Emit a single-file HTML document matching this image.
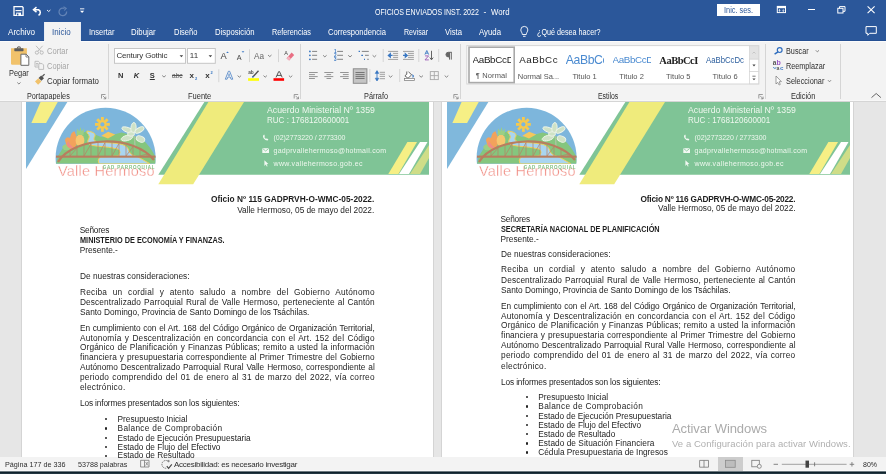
<!DOCTYPE html>
<html><head><meta charset="utf-8"><style>
html,body{margin:0;padding:0;width:886px;height:474px;overflow:hidden;background:#e6e6e6}
body{position:relative;font-family:"Liberation Sans",sans-serif}
#w{position:absolute;left:0;top:0;width:886px;height:474px;will-change:transform}
.t{position:absolute;white-space:pre}
.j{text-align:justify;text-align-last:justify;white-space:normal}
.r{position:absolute}
svg{position:absolute}
</style></head><body><div id="w">
<div class="r" style="left:0px;top:0px;width:886px;height:41px;background:#2b579a;"></div><div class="r" style="left:0px;top:41px;width:886px;height:61px;background:#f3f3f3;"></div><div class="r" style="left:0px;top:102px;width:886px;height:355px;background:#e6e6e6;"></div><div class="r" style="left:0px;top:457px;width:886px;height:14px;background:#f3f3f3;"></div><div class="r" style="left:0px;top:470px;width:886px;height:1px;background:#fafafa;"></div><div class="r" style="left:0px;top:471px;width:886px;height:1px;background:#6d7a80;"></div><div class="r" style="left:0px;top:472px;width:886px;height:1px;background:#0f222c;"></div><div class="r" style="left:0px;top:473px;width:886px;height:1px;background:#233741;"></div><div class="r" style="left:0px;top:40px;width:886px;height:1px;background:#244f92;"></div><div class="r" style="left:0px;top:41px;width:886px;height:1px;background:#fbfbfb;"></div><div class="t" style="left:375.0px;top:6.5px;font-size:8.7px;line-height:11px;letter-spacing:0.000px;color:#ffffff;transform:scaleX(0.8086);transform-origin:0 0;">OFICIOS ENVIADOS INST. 2022</div><div class="t" style="left:483.5px;top:6.5px;font-size:8.7px;line-height:11px;letter-spacing:0.000px;color:#ffffff;">-</div><div class="t" style="left:490.6px;top:6.5px;font-size:8.7px;line-height:11px;letter-spacing:0.000px;color:#ffffff;transform:scaleX(0.8983);transform-origin:0 0;">Word</div><div class="r" style="left:717px;top:4px;width:43px;height:12px;background:#ffffff;"></div><div class="t" style="left:724.0px;top:5.1px;font-size:9px;line-height:11px;letter-spacing:0.000px;color:#2b579a;transform:scaleX(0.8169);transform-origin:0 0;">Inic. ses.</div><div class="r" style="left:45px;top:22px;width:35px;height:20px;background:#f3f3f3;"></div><div class="t" style="left:8.0px;top:26.7px;font-size:9px;line-height:11px;letter-spacing:0.000px;color:#ffffff;transform:scaleX(0.9000);transform-origin:0 0;">Archivo</div><div class="t" style="left:52.4px;top:26.7px;font-size:9px;line-height:11px;letter-spacing:0.000px;color:#2b579a;transform:scaleX(0.8857);transform-origin:0 0;">Inicio</div><div class="t" style="left:88.5px;top:26.7px;font-size:9px;line-height:11px;letter-spacing:0.000px;color:#ffffff;transform:scaleX(0.8361);transform-origin:0 0;">Insertar</div><div class="t" style="left:131.4px;top:26.7px;font-size:9px;line-height:11px;letter-spacing:0.000px;color:#ffffff;transform:scaleX(0.8632);transform-origin:0 0;">Dibujar</div><div class="t" style="left:173.6px;top:26.7px;font-size:9px;line-height:11px;letter-spacing:0.000px;color:#ffffff;transform:scaleX(0.8357);transform-origin:0 0;">Diseño</div><div class="t" style="left:214.7px;top:26.7px;font-size:9px;line-height:11px;letter-spacing:0.000px;color:#ffffff;transform:scaleX(0.8587);transform-origin:0 0;">Disposición</div><div class="t" style="left:271.8px;top:26.7px;font-size:9px;line-height:11px;letter-spacing:0.000px;color:#ffffff;transform:scaleX(0.8083);transform-origin:0 0;">Referencias</div><div class="t" style="left:328.2px;top:26.7px;font-size:9px;line-height:11px;letter-spacing:0.000px;color:#ffffff;transform:scaleX(0.8467);transform-origin:0 0;">Correspondencia</div><div class="t" style="left:404.0px;top:26.7px;font-size:9px;line-height:11px;letter-spacing:0.000px;color:#ffffff;transform:scaleX(0.7869);transform-origin:0 0;">Revisar</div><div class="t" style="left:445.0px;top:26.7px;font-size:9px;line-height:11px;letter-spacing:0.000px;color:#ffffff;transform:scaleX(0.8567);transform-origin:0 0;">Vista</div><div class="t" style="left:479.0px;top:26.7px;font-size:9px;line-height:11px;letter-spacing:0.000px;color:#ffffff;transform:scaleX(0.8681);transform-origin:0 0;">Ayuda</div><div class="t" style="left:536.5px;top:26.7px;font-size:9px;line-height:11px;letter-spacing:0.000px;color:#ffffff;transform:scaleX(0.7987);transform-origin:0 0;">¿Qué desea hacer?</div><div class="r" style="left:44px;top:22px;width:1px;height:19px;background:#e8ecf3"></div><div class="r" style="left:80px;top:22px;width:1px;height:19px;background:#e8ecf3"></div><svg style="left:0;top:0" width="886" height="42" viewBox="0 0 886 42" fill="none" stroke="#fff"><path d="M14 6.7 H22.3 L23.1 7.5 V15.3 H14 Z" stroke-width="1.3"/><path d="M15.5 10.6 H21.6" stroke-width="1.1"/><rect x="16.2" y="12.6" width="4.8" height="2.8" fill="#fff" stroke="none"/><rect x="17" y="13.6" width="1.4" height="1.8" fill="#2b579a" stroke="none"/><path d="M34.5 9.7 H38.5 A3 3 0 0 1 38.5 15.2" stroke-width="1.5"/><path d="M36.5 7.2 L33.5 9.7 L36.5 12.2" stroke-width="1.5"/><path d="M47 10 L48.7 11.5 L50.4 10" stroke-width="0.9"/><path d="M64.5 8.5 A3.8 3.8 0 1 0 66.6 11.5" stroke="#6283b6" stroke-width="1.3"/><path d="M63.5 6.8 L66.2 8.3 L64.2 10.5" stroke="#6283b6" stroke-width="1.1"/><rect x="80" y="8.4" width="4.3" height="0.9" fill="#fff" stroke="none"/><path d="M80 10.8 H84.2 L82.1 13 Z" fill="#fff" stroke="none"/><rect x="777.3" y="6.4" width="8.2" height="6.2" stroke-width="1"/><rect x="777" y="6" width="9" height="2.2" fill="#fff" stroke="none"/><path d="M779.5 11.6 V9.6 M778.7 10.4 L779.5 9.6 L780.3 10.4 M783.3 9.4 V11.4 M782.5 10.6 L783.3 11.4 L784.1 10.6" stroke-width="0.8"/><path d="M808 9.5 H815" stroke-width="1"/><rect x="837.8" y="8.3" width="5.2" height="4.7" stroke-width="1"/><path d="M839.5 8.3 V6.6 H845 V11.3 H843" stroke-width="1"/><path d="M867.6 6.3 L874.6 13.1 M874.6 6.3 L867.6 13.1" stroke-width="1.1"/><path d="M866 26.6 H876.3 V33.3 H869.8 L867.8 35.3 V33.3 H866 Z" stroke-width="1"/><path d="M522.3 34.5 C522.3 32.5 520.8 31.8 520.8 29.9 A3.5 3.5 0 0 1 527.8 29.9 C527.8 31.8 526.3 32.5 526.3 34.5 Z M523 36.3 H525.6" stroke-width="0.9"/></svg><svg style="left:0;top:42px" width="886" height="59" viewBox="0 42 886 59" fill="none" stroke="#444"><path d="M108.5 44 V99" stroke="#d5d5d5" stroke-width="1"/><path d="M300.5 44 V99" stroke="#d5d5d5" stroke-width="1"/><path d="M460.5 44 V99" stroke="#d5d5d5" stroke-width="1"/><path d="M765.5 44 V99" stroke="#d5d5d5" stroke-width="1"/><path d="M840.5 44 V99" stroke="#d5d5d5" stroke-width="1"/><path d="M101.5 98.5 V94.5 H105.5 M102.8 95.8 L105.8 98.8 M105.8 96.6 V98.8 H103.6" stroke="#777" stroke-width="0.7"/><path d="M294.2 98.5 V94.5 H298.2 M295.5 95.8 L298.5 98.8 M298.5 96.6 V98.8 H296.3" stroke="#777" stroke-width="0.7"/><path d="M453.8 98.5 V94.5 H457.8 M455.1 95.8 L458.1 98.8 M458.1 96.6 V98.8 H455.90000000000003" stroke="#777" stroke-width="0.7"/><path d="M758.8 98.5 V94.5 H762.8 M760.0999999999999 95.8 L763.0999999999999 98.8 M763.0999999999999 96.6 V98.8 H760.9" stroke="#777" stroke-width="0.7"/><path d="M11 48.3 H26.9 V64.8 H12.2 Q11 64.8 11 63.6 Z" fill="#f1c26b" stroke="none"/><rect x="14.3" y="48.2" width="9.2" height="3" rx="0.6" fill="#5c5c5c" stroke="none"/><path d="M17.3 48.4 A1.6 1.6 0 0 1 20.5 48.4" stroke="#5c5c5c" stroke-width="1.1"/><path d="M20.9 54.2 H26.2 L28.8 56.8 V65.3 H20.9 Z" fill="#fff" stroke="#6a6a6a" stroke-width="1"/><path d="M26 54.4 V57 H28.6" stroke="#6a6a6a" stroke-width="0.8"/><path d="M17.3 82.5 L18.9 84 L20.5 82.5" stroke="#666" stroke-width="0.8"/><g stroke="#b5b5b5" stroke-width="0.9"><circle cx="36.9" cy="52.6" r="1.6"/><circle cx="41.7" cy="52.6" r="1.6"/><path d="M37.8 51.2 L42.6 45.8 M40.8 51.2 L36 45.8"/></g><g stroke="#b9b9b9" stroke-width="0.9"><path d="M35 61.3 H38.4 L39.6 62.5 V67 H35 Z"/><path d="M38.8 63.6 H42.2 L43.6 65 V69.4 H38.8 Z" fill="#f3f3f3"/><path d="M36 63.5 H38 M36 65 H38"/></g><path d="M35 81.6 L38.3 78.3 L41.4 81.4 L38.1 84.7 Z" fill="#f1c26b" stroke="none"/><path d="M38.6 78 L41.2 75.4 L44 78.2 L41.4 80.8 Z" fill="#505050" stroke="none"/><path d="M42.3 76.5 L44.6 74.2" stroke="#505050" stroke-width="1.2"/><rect x="114.5" y="48.5" width="71" height="14.8" fill="#fff" stroke="#c6c6c6" stroke-width="1"/><rect x="187.5" y="48.5" width="27.8" height="14.8" fill="#fff" stroke="#c6c6c6" stroke-width="1"/><path d="M179.6 55.3 H183.2 L181.4 57.3 Z M208.6 55.3 H212.2 L210.4 57.3 Z" fill="#444" stroke="none"/><path d="M226.2 52.9 L227.5 51.4 L228.8 52.9 Z" fill="#3a78c3" stroke="none"/><path d="M241.6 51.2 L244.4 51.2 L243 52.8 Z" fill="#3a78c3" stroke="none"/><path d="M249.5 49.3 V62.1" stroke="#d5d5d5" stroke-width="1"/><path d="M278.5 49.3 V62.1" stroke="#d5d5d5" stroke-width="1"/><path d="M218.8 69.3 V82.2" stroke="#d5d5d5" stroke-width="1"/><path d="M383.2 49 V62" stroke="#d5d5d5" stroke-width="1"/><path d="M418.8 49 V62" stroke="#d5d5d5" stroke-width="1"/><path d="M438.7 49 V62" stroke="#d5d5d5" stroke-width="1"/><path d="M369.9 69 V82" stroke="#d5d5d5" stroke-width="1"/><path d="M399.7 69 V82" stroke="#d5d5d5" stroke-width="1"/><path d="M268 55 L269.75 56.6 L271.5 55" stroke="#6a6a6a" stroke-width="0.8"/><path d="M162.2 75.5 L164.0 77.1 L165.8 75.5" stroke="#6a6a6a" stroke-width="0.8"/><path d="M237.6 75.6 L239.35 77.19999999999999 L241.1 75.6" stroke="#6a6a6a" stroke-width="0.8"/><path d="M263.5 75.6 L265.2 77.19999999999999 L266.9 75.6" stroke="#6a6a6a" stroke-width="0.8"/><path d="M288.9 75.6 L290.6 77.19999999999999 L292.3 75.6" stroke="#6a6a6a" stroke-width="0.8"/><path d="M323.1 55.3 L324.85 56.9 L326.6 55.3" stroke="#6a6a6a" stroke-width="0.8"/><path d="M348.2 55.3 L350.04999999999995 56.9 L351.9 55.3" stroke="#6a6a6a" stroke-width="0.8"/><path d="M372.6 55.3 L374.4 56.9 L376.2 55.3" stroke="#6a6a6a" stroke-width="0.8"/><path d="M388.8 75.6 L390.6 77.19999999999999 L392.4 75.6" stroke="#6a6a6a" stroke-width="0.8"/><path d="M419.3 75.6 L421.15 77.19999999999999 L423 75.6" stroke="#6a6a6a" stroke-width="0.8"/><path d="M444.7 75.6 L446.5 77.19999999999999 L448.3 75.6" stroke="#6a6a6a" stroke-width="0.8"/><path d="M815.8 50.3 L817.4 51.9 L819 50.3" stroke="#6a6a6a" stroke-width="0.8"/><path d="M828 80.2 L829.5 81.8 L831 80.2" stroke="#6a6a6a" stroke-width="0.8"/><path d="M286.6 58.3 L291.6 52.6 L294.2 55 L289.2 60.6 Z" fill="#e96f84" stroke="none"/><path d="M286.4 58.6 L288.5 56.3 L290.8 58.4 L289 60.6 Z" fill="#f4b3bf" stroke="none"/><path d="M225.3 79.2 L228.4 71.3 H229.7 L232.8 79.2 H231 L230.2 77 H227.9 L227.1 79.2 Z" stroke="#4a82c6" stroke-width="0.8" stroke-linejoin="round" fill="#f3f3f3"/><path d="M228.4 75.6 H229.7 L229.05 73.6 Z" stroke="#4a82c6" stroke-width="0.6" fill="none"/><rect x="248.1" y="78.2" width="10.9" height="2.6" fill="#ffff00" stroke="none"/><path d="M252.5 77.3 L258.5 70.8" stroke="#505050" stroke-width="1.3"/><path d="M252.4 77.4 L253.4 76.1" stroke="#3a78c3" stroke-width="1.2"/><rect x="273.5" y="78.2" width="10.6" height="2.6" fill="#ff0000" stroke="none"/><path d="M276 77.4 L278.7 71.6 H279.5 L282.2 77.4 M277 75.4 H281.2" stroke="#444" stroke-width="0.9"/><circle cx="309.9" cy="51.4" r="0.9" fill="#3a78c3" stroke="none"/><path d="M312.1 51.4 H317.1" stroke="#777" stroke-width="0.9"/><path d="M337.2 51.4 H343" stroke="#777" stroke-width="0.9"/><circle cx="309.9" cy="55.3" r="0.9" fill="#3a78c3" stroke="none"/><path d="M312.1 55.3 H317.1" stroke="#777" stroke-width="0.9"/><path d="M337.2 55.3 H343" stroke="#777" stroke-width="0.9"/><circle cx="309.9" cy="59.3" r="0.9" fill="#3a78c3" stroke="none"/><path d="M312.1 59.3 H317.1" stroke="#777" stroke-width="0.9"/><path d="M337.2 59.3 H343" stroke="#777" stroke-width="0.9"/><path d="M358.6 51.4 H360 M361.3 55.3 H363 M364 59.3 H365" stroke="#3a78c3" stroke-width="1.3"/><path d="M361.8 51.4 H368.8 M365 55.3 H368.8 M367.2 59.3 H368.8" stroke="#777" stroke-width="0.9"/><text x="333.9" y="53.1" font-size="4.6" font-weight="bold" fill="#3a78c3" stroke="none" font-family="Liberation Sans">1</text><text x="333.9" y="57.0" font-size="4.6" font-weight="bold" fill="#3a78c3" stroke="none" font-family="Liberation Sans">2</text><text x="333.9" y="61.0" font-size="4.6" font-weight="bold" fill="#3a78c3" stroke="none" font-family="Liberation Sans">3</text><path d="M388.1 51.4 H398.1 M388.1 59.4 H398.1 M393.1 53.4 H398.1 M393.1 55.4 H398.1 M393.1 57.4 H398.1" stroke="#8a8a8a" stroke-width="0.8"/><path d="M392.6 55.4 H389.6 M390.3 53.6 L388.3 55.4 L390.3 57.2 Z" stroke="#3a78c3" stroke-width="1.2" fill="#3a78c3"/><path d="M403 51.4 H413.9 M403 59.4 H413.9 M408 53.4 H413.9 M408 55.4 H413.9 M408 57.4 H413.9" stroke="#8a8a8a" stroke-width="0.8"/><path d="M403 55.4 H406 M405.3 53.6 L407.3 55.4 L405.3 57.2 Z" stroke="#3a78c3" stroke-width="1.2" fill="#3a78c3"/><path d="M424.9 54.6 L426.8 50.5 L428.7 54.6 M425.7 53.2 H427.9" stroke="#3a78c3" stroke-width="0.9"/><path d="M425 55.9 H428.6 L425 59.9 H428.8" stroke="#9b59b6" stroke-width="0.9"/><path d="M431.5 50.8 V59.5 M429.8 57.6 L431.5 59.8 L433.2 57.6" stroke="#555" stroke-width="0.9"/><path d="M309.0 72.5 H317.7" stroke="#8a8a8a" stroke-width="0.9"/><path d="M309.0 74.6 H314.9" stroke="#8a8a8a" stroke-width="0.9"/><path d="M309.0 76.6 H317.7" stroke="#8a8a8a" stroke-width="0.9"/><path d="M309.0 78.5 H314.9" stroke="#8a8a8a" stroke-width="0.9"/><path d="M324.3 72.5 H333.3" stroke="#8a8a8a" stroke-width="0.9"/><path d="M326.5 74.6 H331.1" stroke="#8a8a8a" stroke-width="0.9"/><path d="M324.3 76.6 H333.3" stroke="#8a8a8a" stroke-width="0.9"/><path d="M326.5 78.5 H331.1" stroke="#8a8a8a" stroke-width="0.9"/><path d="M340.1 72.5 H348.7" stroke="#8a8a8a" stroke-width="0.9"/><path d="M342.9 74.6 H348.7" stroke="#8a8a8a" stroke-width="0.9"/><path d="M340.1 76.6 H348.7" stroke="#8a8a8a" stroke-width="0.9"/><path d="M342.9 78.5 H348.7" stroke="#8a8a8a" stroke-width="0.9"/><rect x="353.3" y="68.8" width="13.6" height="14.5" fill="#c5c5c5" stroke="#8c8c8c" stroke-width="1"/><path d="M355.5 72.5 H364.6" stroke="#6c6c6c" stroke-width="0.9"/><path d="M355.5 74.6 H364.6" stroke="#6c6c6c" stroke-width="0.9"/><path d="M355.5 76.6 H364.6" stroke="#6c6c6c" stroke-width="0.9"/><path d="M355.5 78.5 H364.6" stroke="#6c6c6c" stroke-width="0.9"/><path d="M377 71 V80.5" stroke="#3a78c3" stroke-width="0.9"/><path d="M375.2 73.4 L377 70.6 L378.8 73.4 Z M375.2 78.2 L377 81 L378.8 78.2 Z" fill="#3a78c3" stroke="#3a78c3" stroke-width="0.6"/><path d="M379.7 72.3 H385 M379.7 74.3 H385 M379.7 76.4 H385 M379.7 78.7 H385" stroke="#8a8a8a" stroke-width="0.8"/><path d="M406.8 71.5 V74.2 L404.9 75.8 L408 78.3 L411.6 74.9 L408.4 71.6" stroke="#555" stroke-width="0.9" fill="#fff"/><path d="M412.6 74.6 Q414.6 76.2 412.9 77.6 Z" fill="#3a78c3" stroke="#3a78c3" stroke-width="0.5"/><rect x="404.5" y="78.6" width="10" height="1.8" fill="#fff" stroke="#777" stroke-width="0.7"/><rect x="430.3" y="71.6" width="8" height="8" stroke="#a8a8a8" stroke-width="0.9"/><path d="M434.3 71.6 V79.6 M430.3 75.6 H438.3" stroke="#a8a8a8" stroke-width="0.9"/><circle cx="779.7" cy="50.1" r="2.4" stroke="#2f6ebf" stroke-width="1.2"/><path d="M778 51.9 L774.6 54.2" stroke="#2f6ebf" stroke-width="1.5"/><path d="M776 76 V84 L777.6 82.4 L779.2 85 L780.3 84.4 L779 81.8 L781.4 81.6 Z" stroke="#777" stroke-width="0.7" fill="#fff"/><path d="M773.2 67.4 L774.8 68.4 L776.3 67.6" stroke="#3f7cc8" stroke-width="1"/><rect x="466.8" y="45.6" width="292" height="38.4" fill="#fff" stroke="#d6d6d6" stroke-width="1"/><rect x="469" y="47.2" width="45.2" height="35.4" fill="#fff" stroke="#a9a9a9" stroke-width="1.6"/><rect x="749.4" y="45.8" width="9.3" height="13.4" fill="#e3e3e3" stroke="#d6d6d6" stroke-width="0.8"/><rect x="749.4" y="59.2" width="9.3" height="12.3" fill="#fff" stroke="#d6d6d6" stroke-width="0.8"/><rect x="749.4" y="71.5" width="9.3" height="12.3" fill="#fff" stroke="#d6d6d6" stroke-width="0.8"/><path d="M752.5 53.5 L754 52 L755.5 53.5" stroke="#b9b9b9" stroke-width="0.7"/><path d="M752.4 64.6 H755.6 L754 66.4 Z M752.4 78.4 H755.6 L754 80.2 Z" fill="#444" stroke="none"/><path d="M752.4 76.2 H755.6" stroke="#444" stroke-width="0.7"/><path d="M449.5 52.3 V59.6 M451.3 52.3 V59.6 M451.8 52.3 H448.3 A2.3 2.3 0 0 0 448.3 56.9 H449.5" stroke="#666" stroke-width="1"/><path d="M448.3 52.3 A2.3 2.3 0 0 0 448.3 56.9 H449.5 V52.3 Z" fill="#666" stroke="none"/><path d="M871.5 97.6 L876.2 93.5 L880.9 97.6" stroke="#555" stroke-width="0.9"/></svg><div class="t" style="left:9.0px;top:68.4px;font-size:8.5px;line-height:11px;letter-spacing:0.000px;color:#2e2e2e;transform:scaleX(0.8721);transform-origin:0 0;">Pegar</div><div class="t" style="left:47.0px;top:45.8px;font-size:8.5px;line-height:11px;letter-spacing:0.000px;color:#a6a6a6;transform:scaleX(0.8889);transform-origin:0 0;">Cortar</div><div class="t" style="left:47.0px;top:60.8px;font-size:8.5px;line-height:11px;letter-spacing:0.000px;color:#a6a6a6;transform:scaleX(0.8778);transform-origin:0 0;">Copiar</div><div class="t" style="left:47.0px;top:75.7px;font-size:8.5px;line-height:11px;letter-spacing:0.000px;color:#2e2e2e;transform:scaleX(0.9244);transform-origin:0 0;">Copiar formato</div><div class="t" style="left:27.4px;top:90.8px;font-size:8.5px;line-height:11px;letter-spacing:0.000px;color:#2e2e2e;transform:scaleX(0.8536);transform-origin:0 0;">Portapapeles</div><div class="t" style="left:188.0px;top:90.8px;font-size:8.5px;line-height:11px;letter-spacing:0.000px;color:#2e2e2e;transform:scaleX(0.8798);transform-origin:0 0;">Fuente</div><div class="t" style="left:363.8px;top:90.8px;font-size:8.5px;line-height:11px;letter-spacing:0.000px;color:#2e2e2e;transform:scaleX(0.8605);transform-origin:0 0;">Párrafo</div><div class="t" style="left:597.7px;top:90.8px;font-size:8.5px;line-height:11px;letter-spacing:0.000px;color:#2e2e2e;transform:scaleX(0.8105);transform-origin:0 0;">Estilos</div><div class="t" style="left:791.4px;top:90.8px;font-size:8.5px;line-height:11px;letter-spacing:0.000px;color:#2e2e2e;transform:scaleX(0.8744);transform-origin:0 0;">Edición</div><div class="t" style="left:785.6px;top:45.8px;font-size:8.5px;line-height:11px;letter-spacing:0.000px;color:#2e2e2e;transform:scaleX(0.8538);transform-origin:0 0;">Buscar</div><div class="t" style="left:785.6px;top:60.6px;font-size:8.5px;line-height:11px;letter-spacing:0.000px;color:#2e2e2e;transform:scaleX(0.8526);transform-origin:0 0;">Reemplazar</div><div class="t" style="left:785.6px;top:75.7px;font-size:8.5px;line-height:11px;letter-spacing:0.000px;color:#2e2e2e;transform:scaleX(0.8638);transform-origin:0 0;">Seleccionar</div><div class="t" style="left:116.4px;top:51.2px;font-size:8px;line-height:10px;letter-spacing:-0.175px;color:#333;">Century Gothic</div><div class="t" style="left:189.8px;top:51.2px;font-size:8px;line-height:10px;letter-spacing:0.000px;color:#333;">11</div><div class="t" style="left:118.1px;top:71.0px;font-size:7.5px;line-height:9px;letter-spacing:0.778px;color:#333;font-weight:bold;">N</div><div class="t" style="left:133.7px;top:71.0px;font-size:7.5px;line-height:9px;letter-spacing:0.078px;color:#333;font-weight:bold;font-style:italic;">K</div><div class="t" style="left:149.8px;top:71.0px;font-size:7.5px;line-height:9px;letter-spacing:0.000px;color:#333;font-weight:bold;text-decoration:underline;">S</div><div class="t" style="left:172.4px;top:70.8px;font-size:7.2px;line-height:9px;letter-spacing:0.000px;color:#555;transform:scaleX(0.9143);transform-origin:0 0;text-decoration:line-through;">abc</div><div class="t" style="left:189.5px;top:70.8px;font-size:8px;line-height:10px;letter-spacing:0.247px;color:#333;font-weight:bold;">x</div><div class="t" style="left:195.0px;top:75.7px;font-size:4px;line-height:5px;letter-spacing:0.281px;color:#3a78c3;font-weight:bold;">2</div><div class="t" style="left:205.3px;top:70.8px;font-size:8px;line-height:10px;letter-spacing:0.247px;color:#333;font-weight:bold;">x</div><div class="t" style="left:210.5px;top:69.9px;font-size:4px;line-height:5px;letter-spacing:0.281px;color:#3a78c3;font-weight:bold;">2</div><div class="t" style="left:220.5px;top:50.2px;font-size:9.3px;line-height:12px;letter-spacing:0.000px;color:#444;">A</div><div class="t" style="left:236.8px;top:52.5px;font-size:7.2px;line-height:9px;letter-spacing:0.000px;color:#444;">A</div><div class="t" style="left:253.9px;top:50.2px;font-size:9.2px;line-height:12px;letter-spacing:0.000px;color:#666;transform:scaleX(0.8901);transform-origin:0 0;">Aa</div><div class="t" style="left:284.2px;top:50.0px;font-size:5.5px;line-height:7px;letter-spacing:0.628px;color:#444;">A</div><div class="t" style="left:248.2px;top:70.0px;font-size:4.8px;line-height:6px;letter-spacing:0.000px;color:#555;font-weight:bold;">ab</div><div class="t" style="left:772.8px;top:59.4px;font-size:6.5px;line-height:8px;letter-spacing:0.000px;color:#555;font-weight:bold;">a</div><div class="t" style="left:776.6px;top:58.4px;font-size:7px;line-height:9px;letter-spacing:0.000px;color:#9a55c8;font-weight:bold;">b</div><div class="t" style="left:776.6px;top:65.0px;font-size:5.2px;line-height:6px;letter-spacing:0.000px;color:#555;font-weight:bold;">a</div><div class="t" style="left:779.9px;top:64.0px;font-size:6.2px;line-height:8px;letter-spacing:0.000px;color:#3f7cc8;font-weight:bold;">c</div><div class="t" style="left:472.5px;top:54.0px;font-size:9.8px;line-height:12px;letter-spacing:0.000px;color:#222;width:38.5px;overflow:hidden;letter-spacing:-0.3px">AaBbCcD</div><div class="t" style="left:475.8px;top:70.9px;font-size:7.5px;line-height:9px;letter-spacing:0.129px;color:#555;">¶ Normal</div><div class="t" style="left:519.2px;top:54.2px;font-size:9.8px;line-height:12px;letter-spacing:0.489px;color:#222;">AaBbCc</div><div class="t" style="left:517.8px;top:71.5px;font-size:7.5px;line-height:9px;letter-spacing:-0.043px;color:#555;">Normal Sa...</div><div class="t" style="left:565.8px;top:52.8px;font-size:12.2px;line-height:15px;letter-spacing:0.000px;color:#4a8ad0;width:38.4px;overflow:hidden;letter-spacing:-0.4px">AaBbCc</div><div class="t" style="left:572.4px;top:71.5px;font-size:7.5px;line-height:9px;letter-spacing:-0.002px;color:#555;">Titulo 1</div><div class="t" style="left:612.6px;top:54.0px;font-size:9.8px;line-height:12px;letter-spacing:0.000px;color:#4a8ad0;width:38.2px;overflow:hidden;letter-spacing:-0.4px">AaBbCcD</div><div class="t" style="left:619.2px;top:71.5px;font-size:7.5px;line-height:9px;letter-spacing:0.055px;color:#555;">Titulo 2</div><div class="t" style="left:659.3px;top:53.5px;font-size:10.5px;line-height:13px;letter-spacing:0.000px;color:#222;font-weight:bold;width:38.7px;overflow:hidden;font-family:Liberation Serif,serif;letter-spacing:-0.5px">AaBbCcI</div><div class="t" style="left:666.0px;top:71.5px;font-size:7.5px;line-height:9px;letter-spacing:0.027px;color:#555;">Titulo 5</div><div class="t" style="left:706.2px;top:54.8px;font-size:8.6px;line-height:11px;letter-spacing:0.000px;color:#2d5f9e;transform:scaleX(0.9041);transform-origin:0 0;">AaBbCcDc</div><div class="t" style="left:712.6px;top:71.5px;font-size:7.5px;line-height:9px;letter-spacing:0.113px;color:#555;">Titulo 6</div><div class="r" style="left:718px;top:457px;width:25px;height:14px;background:#cdcdcd;"></div><svg style="left:0;top:456px" width="886" height="15" viewBox="0 456 886 15" fill="none" stroke="#777"><path d="M140.6 460.3 H144.5 V467 H140.6 Z M144.5 460.3 H149 V467 H144.5" stroke-width="0.8"/><path d="M145.6 462 L148 465.5 M148 462 L145.6 465.5" stroke-width="0.7"/><path d="M167.8 461 A3.9 3.9 0 1 0 166.5 468.2" stroke-width="1" stroke-dasharray="1.6 0.9"/><path d="M168.6 459.9 V462.3 M167.4 461.1 H169.8" stroke-width="0.8"/><path d="M166.8 466.2 L168.6 468.3 L171.8 464.4" stroke="#444" stroke-width="1.1"/><path d="M699.6 460.4 H704 V467.2 H699.6 Z M704 460.4 H708.5 V467.2 H704" stroke-width="0.8"/><rect x="725.6" y="460.3" width="9.6" height="7" fill="#bdbdbd" stroke="#8a8a8a" stroke-width="0.8"/><rect x="751.8" y="460.3" width="7.5" height="6.5" stroke-width="0.8"/><circle cx="759.3" cy="466.3" r="2" fill="#f3f3f3" stroke-width="0.8"/><path d="M773.6 464.3 H778 M849.7 464.3 H854.2 M851.95 462.1 V466.5" stroke="#777" stroke-width="0.9"/><path d="M781.8 464.3 H846.6" stroke="#8a8a8a" stroke-width="0.8"/><rect x="805.5" y="460.6" width="3.5" height="7.1" fill="#444" stroke="none"/><path d="M814.6 462.3 V466.3" stroke="#666" stroke-width="0.8"/></svg><div class="t" style="left:5.4px;top:459.6px;font-size:8px;line-height:10px;letter-spacing:0.000px;color:#2e2e2e;transform:scaleX(0.9000);transform-origin:0 0;">Página 177 de 336</div><div class="t" style="left:78.0px;top:459.6px;font-size:8px;line-height:10px;letter-spacing:0.000px;color:#2e2e2e;transform:scaleX(0.8931);transform-origin:0 0;">53788 palabras</div><div class="t" style="left:174.0px;top:459.6px;font-size:8px;line-height:10px;letter-spacing:-0.258px;color:#2e2e2e;">Accesibilidad: es necesario investigar</div><div class="t" style="left:862.8px;top:459.6px;font-size:8px;line-height:10px;letter-spacing:0.000px;color:#2e2e2e;transform:scaleX(0.8741);transform-origin:0 0;">80%</div><div class="r" style="left:21px;top:102px;width:1px;height:355px;background:#d4d4d4;"></div><div class="r" style="left:22px;top:102px;width:411px;height:355px;background:#ffffff;"></div><div class="r" style="left:433px;top:102px;width:1px;height:355px;background:#d4d4d4;"></div><div class="r" style="left:441px;top:102px;width:1px;height:355px;background:#d4d4d4;"></div><div class="r" style="left:442px;top:102px;width:411px;height:355px;background:#ffffff;"></div><div class="r" style="left:853px;top:102px;width:1px;height:355px;background:#d4d4d4;"></div><svg style="left:0;top:0" width="886" height="474" viewBox="0 0 886 474"><polygon points="26,101 68,101 26,169" fill="#80b8dc"/><polygon points="41,101 58.3,101 46.1,123 31.4,123" fill="#f6ef85"/><polygon points="205,101 429,101 429,174.8 158.3,174.8" fill="#7fc496"/><polygon points="209,101 244.6,101 193.2,184.3 158.3,184.3" fill="#efeb7c"/><polygon points="407.4,142 417,142 398.4,174 388.3,174" fill="#f6ef85"/><polygon points="420,142 427.5,142 409,174 399,174" fill="#ffffff"/><polygon points="429,145 429,158 420,174 410,174" fill="#cfdd88"/><clipPath id="dc0"><rect x="50" y="100" width="120" height="63.8"/></clipPath><circle cx="105.6" cy="157.8" r="50" fill="#7db6dc" clip-path="url(#dc0)"/><clipPath id="dc0b"><path d="M55.96 163.8 A50 50 0 1 1 155.24 163.8 Z"/></clipPath><g transform="translate(0,0)" clip-path="url(#dc0b)"><path d="M56 163.8 L58 156 Q66 141 78 135 L87 131 Q94 134 101 137 L114 134.5 L121.5 132.6 Q133 135 142 139 Q150 146 155 156 L156 163.8 Z" fill="#85c67e"/><path d="M101.3 135.7 L108.2 131.8 L115.2 134.5 L108 138.5 Z" fill="#f5c75c"/><path d="M87 131 Q96 132 95 136 Q92 140 97 142 L118 143.5 Q128 145 129 151 Q130 155 138 157 L150 163.8 H99 Q97 160 100 157 L118 156 Q122 152 118 149 Q110 147 96 146 Q86 145 88 140 Q91 136 87 133 Z" fill="#a9d5f0" stroke="#f2cf5a" stroke-width="1"/><g transform="translate(102.4 124.4)" fill="#f6c94e"><rect x="-1.4" y="-7.4" width="2.8" height="3.6" transform="rotate(0)"/><rect x="-1.4" y="-7.4" width="2.8" height="3.6" transform="rotate(45)"/><rect x="-1.4" y="-7.4" width="2.8" height="3.6" transform="rotate(90)"/><rect x="-1.4" y="-7.4" width="2.8" height="3.6" transform="rotate(135)"/><rect x="-1.4" y="-7.4" width="2.8" height="3.6" transform="rotate(180)"/><rect x="-1.4" y="-7.4" width="2.8" height="3.6" transform="rotate(225)"/><rect x="-1.4" y="-7.4" width="2.8" height="3.6" transform="rotate(270)"/><rect x="-1.4" y="-7.4" width="2.8" height="3.6" transform="rotate(315)"/><circle r="4.3"/><circle r="2.1" fill="#7db6dc"/></g><path d="M62 147 Q66 141 76 146 Q72 151 64 150 Z" fill="#9ccf84"/><path d="M65 140 Q66 136 70 138 Q71 132 74.5 131.3 Q77 136 77.5 142 Q76 148 71 149 Q66 147 65 140 Z" fill="#f2a25c"/><path d="M68 141 Q70 145 74 148 Q69 149 66.5 145 Z" fill="#f08d86"/><ellipse cx="80" cy="140.5" rx="4.4" ry="6" fill="#f6c770"/><path d="M76.5 135 L77 128.5 L79.3 131.5 L80.4 126.9 L81.8 131.5 L84 128.6 L83.5 135 Z" fill="#9ccf84"/><path d="M134.5 136 L135 148" stroke="#a9c4a0" stroke-width="1.4"/><g fill="#cfe2c6" stroke="#eef5ea" stroke-width="0.9"><ellipse cx="128" cy="130" rx="6.5" ry="2.4" transform="rotate(20 128 130)"/><ellipse cx="127" cy="138" rx="6" ry="2.6" transform="rotate(-15 127 138)"/><ellipse cx="133.5" cy="128" rx="2.6" ry="5.5" transform="rotate(5 133.5 128)"/><ellipse cx="139.5" cy="130" rx="5" ry="2.3" transform="rotate(-30 139.5 130)"/><ellipse cx="140.5" cy="139" rx="4.5" ry="2.8" transform="rotate(25 140.5 139)"/><ellipse cx="131" cy="134" rx="3.5" ry="2.2" transform="rotate(0 131 134)"/></g><path d="M58 162 C74 136 134 134 154 160" stroke="#b97d5f" stroke-width="2.2" fill="none"/><rect x="56" y="155.6" width="100" height="2.1" fill="#b97d5f"/><g stroke="#b98063" stroke-width="0.7"><path d="M70 151.6 V156"/><path d="M77 148.1 V156"/><path d="M84 145.5 V156"/><path d="M91 143.9 V156"/><path d="M98 142.9 V156"/><path d="M105 142.5 V156"/><path d="M112 142.6 V156"/><path d="M119 143.4 V156"/><path d="M126 144.6 V156"/><path d="M133 146.7 V156"/><path d="M140 149.7 V156"/><path d="M147 154.0 V156"/><path d="M70 156 L77 148.1"/><path d="M84 156 L91 143.9"/><path d="M98 156 L105 142.5"/><path d="M112 156 L119 143.4"/><path d="M126 156 L133 146.7"/><path d="M140 156 L147 154.0"/></g></g><g transform="translate(0,0)" fill="#f2f8f2"><path d="M263.3 135.2 Q262.5 136.5 263.6 138.3 Q265.3 140.6 267.6 140.5 L268.4 139.4 L266.8 138.2 L266 138.9 Q264.8 138.2 264.3 137 L264.9 136.3 L264.2 134.6 Z"/><path d="M262.3 148.2 H269 V153 H262.3 Z" fill="#f2f8f2"/><path d="M262.5 148.4 L265.65 151 L268.8 148.4" stroke="#7fc496" stroke-width="0.8" fill="none"/><path d="M264.4 160.3 V166 L265.7 164.6 L266.8 166.6 L267.6 166.2 L266.6 164.2 L268.4 164 Z"/></g></svg><div class="t" style="left:267.2px;top:104.3px;font-size:9.5px;line-height:12px;letter-spacing:0.000px;color:#eef7ee;transform:scaleX(0.9176);transform-origin:0 0;">Acuerdo Ministerial Nº 1359</div><div class="t" style="left:267.2px;top:114.2px;font-size:9.5px;line-height:12px;letter-spacing:0.000px;color:#eef7ee;transform:scaleX(0.8471);transform-origin:0 0;">RUC : 1768120600001</div><div class="t" style="left:273.5px;top:132.5px;font-size:7px;line-height:9px;letter-spacing:-0.041px;color:#eef7ee;">(02)2773220 / 2773300</div><div class="t" style="left:273.5px;top:145.7px;font-size:7px;line-height:9px;letter-spacing:0.291px;color:#eef7ee;">gadprvallehermoso@hotmail.com</div><div class="t" style="left:273.5px;top:158.5px;font-size:7px;line-height:9px;letter-spacing:0.346px;color:#eef7ee;">www.vallehermoso.gob.ec</div><div class="t" style="left:57.9px;top:161.8px;font-size:14.5px;line-height:18px;letter-spacing:0.225px;color:#f08a80;-webkit-text-stroke:0.35px #fff;">Valle Hermoso</div><div class="t" style="left:102.7px;top:164.5px;font-size:4.5px;line-height:6px;letter-spacing:0.825px;color:#7fbf80;font-weight:bold;">GAD PARROQUIAL</div><svg style="left:0;top:0" width="886" height="474" viewBox="0 0 886 474"><polygon points="447,101 489,101 447,169" fill="#80b8dc"/><polygon points="462,101 479.3,101 467.1,123 452.4,123" fill="#f6ef85"/><polygon points="626,101 850,101 850,174.8 579.3,174.8" fill="#7fc496"/><polygon points="630,101 665.6,101 614.2,184.3 579.3,184.3" fill="#efeb7c"/><polygon points="828.4,142 838,142 819.4,174 809.3,174" fill="#f6ef85"/><polygon points="841,142 848.5,142 830,174 820,174" fill="#ffffff"/><polygon points="850,145 850,158 841,174 831,174" fill="#cfdd88"/><clipPath id="dc421"><rect x="471" y="100" width="120" height="63.8"/></clipPath><circle cx="526.6" cy="157.8" r="50" fill="#7db6dc" clip-path="url(#dc421)"/><clipPath id="dc421b"><path d="M55.96 163.8 A50 50 0 1 1 155.24 163.8 Z"/></clipPath><g transform="translate(421,0)" clip-path="url(#dc421b)"><path d="M56 163.8 L58 156 Q66 141 78 135 L87 131 Q94 134 101 137 L114 134.5 L121.5 132.6 Q133 135 142 139 Q150 146 155 156 L156 163.8 Z" fill="#85c67e"/><path d="M101.3 135.7 L108.2 131.8 L115.2 134.5 L108 138.5 Z" fill="#f5c75c"/><path d="M87 131 Q96 132 95 136 Q92 140 97 142 L118 143.5 Q128 145 129 151 Q130 155 138 157 L150 163.8 H99 Q97 160 100 157 L118 156 Q122 152 118 149 Q110 147 96 146 Q86 145 88 140 Q91 136 87 133 Z" fill="#a9d5f0" stroke="#f2cf5a" stroke-width="1"/><g transform="translate(102.4 124.4)" fill="#f6c94e"><rect x="-1.4" y="-7.4" width="2.8" height="3.6" transform="rotate(0)"/><rect x="-1.4" y="-7.4" width="2.8" height="3.6" transform="rotate(45)"/><rect x="-1.4" y="-7.4" width="2.8" height="3.6" transform="rotate(90)"/><rect x="-1.4" y="-7.4" width="2.8" height="3.6" transform="rotate(135)"/><rect x="-1.4" y="-7.4" width="2.8" height="3.6" transform="rotate(180)"/><rect x="-1.4" y="-7.4" width="2.8" height="3.6" transform="rotate(225)"/><rect x="-1.4" y="-7.4" width="2.8" height="3.6" transform="rotate(270)"/><rect x="-1.4" y="-7.4" width="2.8" height="3.6" transform="rotate(315)"/><circle r="4.3"/><circle r="2.1" fill="#7db6dc"/></g><path d="M62 147 Q66 141 76 146 Q72 151 64 150 Z" fill="#9ccf84"/><path d="M65 140 Q66 136 70 138 Q71 132 74.5 131.3 Q77 136 77.5 142 Q76 148 71 149 Q66 147 65 140 Z" fill="#f2a25c"/><path d="M68 141 Q70 145 74 148 Q69 149 66.5 145 Z" fill="#f08d86"/><ellipse cx="80" cy="140.5" rx="4.4" ry="6" fill="#f6c770"/><path d="M76.5 135 L77 128.5 L79.3 131.5 L80.4 126.9 L81.8 131.5 L84 128.6 L83.5 135 Z" fill="#9ccf84"/><path d="M134.5 136 L135 148" stroke="#a9c4a0" stroke-width="1.4"/><g fill="#cfe2c6" stroke="#eef5ea" stroke-width="0.9"><ellipse cx="128" cy="130" rx="6.5" ry="2.4" transform="rotate(20 128 130)"/><ellipse cx="127" cy="138" rx="6" ry="2.6" transform="rotate(-15 127 138)"/><ellipse cx="133.5" cy="128" rx="2.6" ry="5.5" transform="rotate(5 133.5 128)"/><ellipse cx="139.5" cy="130" rx="5" ry="2.3" transform="rotate(-30 139.5 130)"/><ellipse cx="140.5" cy="139" rx="4.5" ry="2.8" transform="rotate(25 140.5 139)"/><ellipse cx="131" cy="134" rx="3.5" ry="2.2" transform="rotate(0 131 134)"/></g><path d="M58 162 C74 136 134 134 154 160" stroke="#b97d5f" stroke-width="2.2" fill="none"/><rect x="56" y="155.6" width="100" height="2.1" fill="#b97d5f"/><g stroke="#b98063" stroke-width="0.7"><path d="M70 151.6 V156"/><path d="M77 148.1 V156"/><path d="M84 145.5 V156"/><path d="M91 143.9 V156"/><path d="M98 142.9 V156"/><path d="M105 142.5 V156"/><path d="M112 142.6 V156"/><path d="M119 143.4 V156"/><path d="M126 144.6 V156"/><path d="M133 146.7 V156"/><path d="M140 149.7 V156"/><path d="M147 154.0 V156"/><path d="M70 156 L77 148.1"/><path d="M84 156 L91 143.9"/><path d="M98 156 L105 142.5"/><path d="M112 156 L119 143.4"/><path d="M126 156 L133 146.7"/><path d="M140 156 L147 154.0"/></g></g><g transform="translate(421,0)" fill="#f2f8f2"><path d="M263.3 135.2 Q262.5 136.5 263.6 138.3 Q265.3 140.6 267.6 140.5 L268.4 139.4 L266.8 138.2 L266 138.9 Q264.8 138.2 264.3 137 L264.9 136.3 L264.2 134.6 Z"/><path d="M262.3 148.2 H269 V153 H262.3 Z" fill="#f2f8f2"/><path d="M262.5 148.4 L265.65 151 L268.8 148.4" stroke="#7fc496" stroke-width="0.8" fill="none"/><path d="M264.4 160.3 V166 L265.7 164.6 L266.8 166.6 L267.6 166.2 L266.6 164.2 L268.4 164 Z"/></g></svg><div class="t" style="left:688.2px;top:104.3px;font-size:9.5px;line-height:12px;letter-spacing:0.000px;color:#eef7ee;transform:scaleX(0.9176);transform-origin:0 0;">Acuerdo Ministerial Nº 1359</div><div class="t" style="left:688.2px;top:114.2px;font-size:9.5px;line-height:12px;letter-spacing:0.000px;color:#eef7ee;transform:scaleX(0.8471);transform-origin:0 0;">RUC : 1768120600001</div><div class="t" style="left:694.5px;top:132.5px;font-size:7px;line-height:9px;letter-spacing:-0.041px;color:#eef7ee;">(02)2773220 / 2773300</div><div class="t" style="left:694.5px;top:145.7px;font-size:7px;line-height:9px;letter-spacing:0.291px;color:#eef7ee;">gadprvallehermoso@hotmail.com</div><div class="t" style="left:694.5px;top:158.5px;font-size:7px;line-height:9px;letter-spacing:0.346px;color:#eef7ee;">www.vallehermoso.gob.ec</div><div class="t" style="left:478.9px;top:161.8px;font-size:14.5px;line-height:18px;letter-spacing:0.225px;color:#f08a80;-webkit-text-stroke:0.35px #fff;">Valle Hermoso</div><div class="t" style="left:523.7px;top:164.5px;font-size:4.5px;line-height:6px;letter-spacing:0.825px;color:#7fbf80;font-weight:bold;">GAD PARROQUIAL</div><div class="r" style="left:0px;top:100px;width:886px;height:1px;background:#f8f8f8;"></div><div class="r" style="left:0px;top:101px;width:886px;height:1px;background:#d5d5d5;"></div><div class="t" style="left:211.0px;top:194.3px;font-size:8.3px;line-height:10px;letter-spacing:0.024px;color:#1e1e1e;font-weight:bold;">Oficio Nº 115 GADPRVH-O-WMC-05-2022.</div><div class="t" style="left:237.2px;top:204.8px;font-size:8.3px;line-height:10px;letter-spacing:-0.035px;color:#1e1e1e;">Valle Hermoso, 05 de mayo del 2022.</div><div class="t" style="left:79.7px;top:224.9px;font-size:8.3px;line-height:10px;letter-spacing:-0.215px;color:#1e1e1e;">Señores</div><div class="t" style="left:79.7px;top:235.4px;font-size:8.3px;line-height:10px;letter-spacing:0.000px;color:#1e1e1e;font-weight:bold;transform:scaleX(0.8823);transform-origin:0 0;">MINISTERIO DE ECONOMÍA Y FINANZAS.</div><div class="t" style="left:79.7px;top:245.4px;font-size:8.3px;line-height:10px;letter-spacing:-0.009px;color:#1e1e1e;">Presente.-</div><div class="t" style="left:80.0px;top:270.7px;font-size:8.3px;line-height:10px;letter-spacing:0.007px;color:#1e1e1e;">De nuestras consideraciones:</div><div class="t" style="left:80.0px;top:286.5px;font-size:8.3px;line-height:10px;letter-spacing:0.220px;word-spacing:3.114px;color:#1e1e1e;">Reciba un cordial y atento saludo a nombre del Gobierno Autónomo</div><div class="t" style="left:80.0px;top:296.9px;font-size:8.3px;line-height:10px;letter-spacing:0.103px;word-spacing:0.633px;color:#1e1e1e;">Descentralizado Parroquial Rural de Valle Hermoso, perteneciente al Cantón</div><div class="t" style="left:80.0px;top:306.5px;font-size:8.3px;line-height:10px;letter-spacing:-0.010px;color:#1e1e1e;">Santo Domingo, Provincia de Santo Domingo de los Tsáchilas.</div><div class="t" style="left:80.0px;top:323.0px;font-size:8.3px;line-height:10px;letter-spacing:-0.098px;word-spacing:0.600px;color:#1e1e1e;">En cumplimiento con el Art. 168 del Código Orgánico de Organización Territorial,</div><div class="t" style="left:80.0px;top:332.6px;font-size:8.3px;line-height:10px;letter-spacing:0.165px;word-spacing:0.792px;color:#1e1e1e;">Autonomía y Descentralización en concordancia con el Art. 152 del Código</div><div class="t" style="left:80.0px;top:342.2px;font-size:8.3px;line-height:10px;letter-spacing:0.105px;word-spacing:0.534px;color:#1e1e1e;">Orgánico de Planificación y Finanzas Públicas; remito a usted la información</div><div class="t" style="left:80.0px;top:351.7px;font-size:8.3px;line-height:10px;letter-spacing:0.088px;word-spacing:0.555px;color:#1e1e1e;">financiera y presupuestaria correspondiente al Primer Trimestre del Gobierno</div><div class="t" style="left:80.0px;top:361.7px;font-size:8.3px;line-height:10px;letter-spacing:-0.004px;word-spacing:0.600px;color:#1e1e1e;">Autónomo Descentralizado Parroquial Rural Valle Hermoso, correspondiente al</div><div class="t" style="left:80.0px;top:372.0px;font-size:8.3px;line-height:10px;letter-spacing:0.203px;word-spacing:0.738px;color:#1e1e1e;">periodo comprendido del 01 de enero al 31 de marzo del 2022, vía correo</div><div class="t" style="left:80.0px;top:382.4px;font-size:8.3px;line-height:10px;letter-spacing:0.251px;color:#1e1e1e;">electrónico.</div><div class="t" style="left:80.0px;top:398.4px;font-size:8.3px;line-height:10px;letter-spacing:-0.150px;color:#1e1e1e;">Los informes presentados son los siguientes:</div><div class="r" style="left:104.9px;top:418.2px;width:2.3px;height:2.3px;border-radius:50%;background:#222"></div><div class="t" style="left:117.6px;top:413.8px;font-size:8.3px;line-height:10px;letter-spacing:-0.017px;color:#1e1e1e;">Presupuesto Inicial</div><div class="r" style="left:104.9px;top:427.4px;width:2.3px;height:2.3px;border-radius:50%;background:#222"></div><div class="t" style="left:117.6px;top:423.0px;font-size:8.3px;line-height:10px;letter-spacing:0.303px;color:#1e1e1e;">Balance de Comprobación</div><div class="r" style="left:104.9px;top:437.0px;width:2.3px;height:2.3px;border-radius:50%;background:#222"></div><div class="t" style="left:117.6px;top:432.6px;font-size:8.3px;line-height:10px;letter-spacing:-0.020px;color:#1e1e1e;">Estado de Ejecución Presupuestaria</div><div class="r" style="left:104.9px;top:446.2px;width:2.3px;height:2.3px;border-radius:50%;background:#222"></div><div class="t" style="left:117.6px;top:441.8px;font-size:8.3px;line-height:10px;letter-spacing:-0.002px;color:#1e1e1e;">Estado de Flujo del Efectivo</div><div class="r" style="left:104.9px;top:454.6px;width:2.3px;height:2.3px;border-radius:50%;background:#222"></div><div class="t" style="left:117.6px;top:450.2px;font-size:8.3px;line-height:10px;letter-spacing:-0.001px;color:#1e1e1e;">Estado de Resultado</div><div class="t" style="left:640.5px;top:193.5px;font-size:8.3px;line-height:10px;letter-spacing:-0.210px;color:#1e1e1e;font-weight:bold;">Oficio Nº 116 GADPRVH-O-WMC-05-2022.</div><div class="t" style="left:658.0px;top:203.0px;font-size:8.3px;line-height:10px;letter-spacing:-0.020px;color:#1e1e1e;">Valle Hermoso, 05 de mayo del 2022.</div><div class="t" style="left:500.5px;top:214.0px;font-size:8.3px;line-height:10px;letter-spacing:-0.215px;color:#1e1e1e;">Señores</div><div class="t" style="left:500.5px;top:224.0px;font-size:8.3px;line-height:10px;letter-spacing:0.000px;color:#1e1e1e;font-weight:bold;transform:scaleX(0.8807);transform-origin:0 0;">SECRETARÍA NACIONAL DE PLANIFICACIÓN</div><div class="t" style="left:500.5px;top:233.5px;font-size:8.3px;line-height:10px;letter-spacing:-0.009px;color:#1e1e1e;">Presente.-</div><div class="t" style="left:501.0px;top:248.5px;font-size:8.3px;line-height:10px;letter-spacing:0.007px;color:#1e1e1e;">De nuestras consideraciones:</div><div class="t" style="left:501.1px;top:264.0px;font-size:8.3px;line-height:10px;letter-spacing:0.220px;word-spacing:3.074px;color:#1e1e1e;">Reciba un cordial y atento saludo a nombre del Gobierno Autónomo</div><div class="t" style="left:501.1px;top:274.5px;font-size:8.3px;line-height:10px;letter-spacing:0.099px;word-spacing:0.613px;color:#1e1e1e;">Descentralizado Parroquial Rural de Valle Hermoso, perteneciente al Cantón</div><div class="t" style="left:501.1px;top:285.0px;font-size:8.3px;line-height:10px;letter-spacing:-0.011px;color:#1e1e1e;">Santo Domingo, Provincia de Santo Domingo de los Tsáchilas.</div><div class="t" style="left:501.1px;top:301.1px;font-size:8.3px;line-height:10px;letter-spacing:-0.103px;word-spacing:0.600px;color:#1e1e1e;">En cumplimiento con el Art. 168 del Código Orgánico de Organización Territorial,</div><div class="t" style="left:501.1px;top:311.1px;font-size:8.3px;line-height:10px;letter-spacing:0.162px;word-spacing:0.776px;color:#1e1e1e;">Autonomía y Descentralización en concordancia con el Art. 152 del Código</div><div class="t" style="left:501.1px;top:320.3px;font-size:8.3px;line-height:10px;letter-spacing:0.102px;word-spacing:0.518px;color:#1e1e1e;">Orgánico de Planificación y Finanzas Públicas; remito a usted la información</div><div class="t" style="left:501.1px;top:329.9px;font-size:8.3px;line-height:10px;letter-spacing:0.085px;word-spacing:0.535px;color:#1e1e1e;">financiera y presupuestaria correspondiente al Primer Trimestre del Gobierno</div><div class="t" style="left:501.1px;top:339.9px;font-size:8.3px;line-height:10px;letter-spacing:-0.009px;word-spacing:0.600px;color:#1e1e1e;">Autónomo Descentralizado Parroquial Rural Valle Hermoso, correspondiente al</div><div class="t" style="left:501.1px;top:350.2px;font-size:8.3px;line-height:10px;letter-spacing:0.199px;word-spacing:0.726px;color:#1e1e1e;">periodo comprendido del 01 de enero al 31 de marzo del 2022, vía correo</div><div class="t" style="left:501.1px;top:360.6px;font-size:8.3px;line-height:10px;letter-spacing:0.242px;color:#1e1e1e;">electrónico.</div><div class="t" style="left:501.1px;top:377.1px;font-size:8.3px;line-height:10px;letter-spacing:-0.153px;color:#1e1e1e;">Los informes presentados son los siguientes:</div><div class="r" style="left:525.9px;top:396.1px;width:2.3px;height:2.3px;border-radius:50%;background:#222"></div><div class="t" style="left:538.3px;top:391.7px;font-size:8.3px;line-height:10px;letter-spacing:-0.017px;color:#1e1e1e;">Presupuesto Inicial</div><div class="r" style="left:525.9px;top:405.3px;width:2.3px;height:2.3px;border-radius:50%;background:#222"></div><div class="t" style="left:538.3px;top:400.9px;font-size:8.3px;line-height:10px;letter-spacing:0.303px;color:#1e1e1e;">Balance de Comprobación</div><div class="r" style="left:525.9px;top:414.9px;width:2.3px;height:2.3px;border-radius:50%;background:#222"></div><div class="t" style="left:538.3px;top:410.5px;font-size:8.3px;line-height:10px;letter-spacing:-0.020px;color:#1e1e1e;">Estado de Ejecución Presupuestaria</div><div class="r" style="left:525.9px;top:423.9px;width:2.3px;height:2.3px;border-radius:50%;background:#222"></div><div class="t" style="left:538.3px;top:419.5px;font-size:8.3px;line-height:10px;letter-spacing:-0.002px;color:#1e1e1e;">Estado de Flujo del Efectivo</div><div class="r" style="left:525.9px;top:432.9px;width:2.3px;height:2.3px;border-radius:50%;background:#222"></div><div class="t" style="left:538.3px;top:428.5px;font-size:8.3px;line-height:10px;letter-spacing:-0.001px;color:#1e1e1e;">Estado de Resultado</div><div class="r" style="left:525.9px;top:442.4px;width:2.3px;height:2.3px;border-radius:50%;background:#222"></div><div class="t" style="left:538.3px;top:438.0px;font-size:8.3px;line-height:10px;letter-spacing:0.040px;color:#1e1e1e;">Estado de Situación Financiera</div><div class="r" style="left:525.9px;top:451.4px;width:2.3px;height:2.3px;border-radius:50%;background:#222"></div><div class="t" style="left:538.3px;top:447.0px;font-size:8.3px;line-height:10px;letter-spacing:-0.017px;color:#1e1e1e;">Cédula Presupuestaria de Ingresos</div><div class="t" style="left:672.0px;top:421.0px;font-size:13px;line-height:16px;letter-spacing:-0.078px;color:#ababab;">Activar Windows</div><div class="t" style="left:672.0px;top:437.5px;font-size:9.5px;line-height:12px;letter-spacing:0.056px;color:#b0b0b0;">Ve a Configuración para activar Windows.</div>
</div></body></html>
